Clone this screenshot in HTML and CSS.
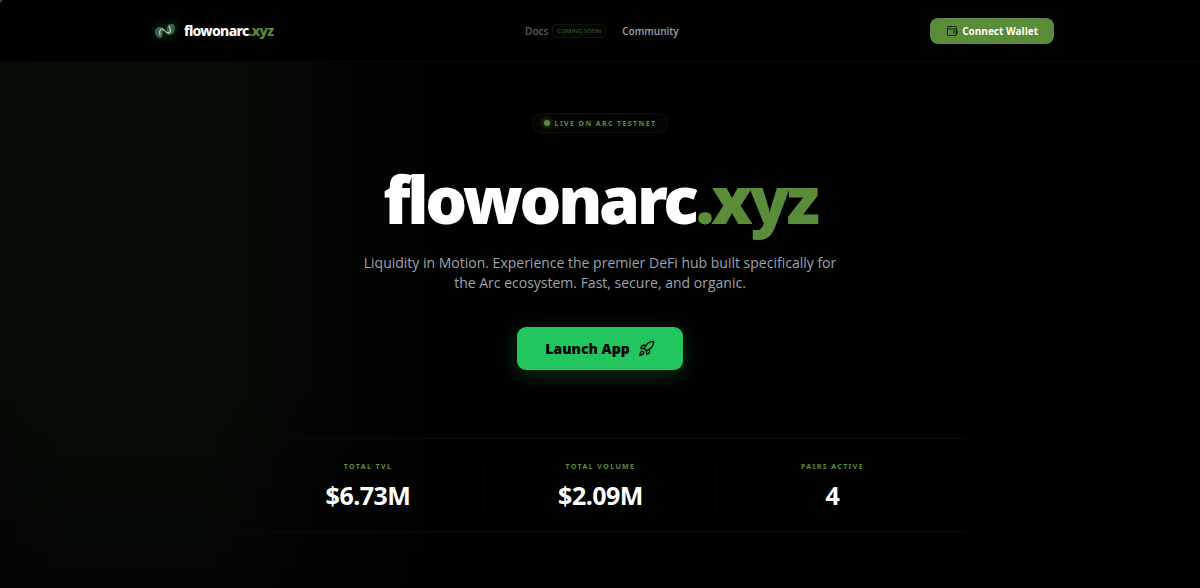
FILE: index.html
```html
<!DOCTYPE html>
<html lang="en">
<head>
  <meta charset="UTF-8">
  <meta name="viewport" content="width=device-width, initial-scale=1">
  <title>flowonarc.xyz</title>
  <link rel="stylesheet" href="styles.css">
</head>
<body>

  <header class="navbar">
    <div class="navbar-inner">
      <a class="brand" href="#">
        <svg class="brand-logo" viewBox="0 0 22 18" aria-hidden="true">
          <path d="M1 10C1 6 4 4.500 7 5C10 5.500 10 8 9 10.500L8 15.500C5 17 1 15 1 10Z" fill="#37634a"/>
          <path d="M21 6C21 11 18 13 15 13C12 13 12 9 13 6L14 3C17 1 21 1 21 6Z" fill="#37634a"/>
          <path d="M6 13C5 9 6 7 8 7C11 7 11 11 14 11C17 11 17 7 15 4" fill="none" stroke="#c3cfc6" stroke-width="1.2" stroke-linecap="round"/>
        </svg>
        <span class="brand-name">flowonarc<span class="green">.xyz</span></span>
      </a>

      <nav class="nav-links">
        <span class="nav-item disabled">Docs <span class="soon">COMING SOON</span></span>
        <a class="nav-item" href="#">Community</a>
      </nav>

      <button class="btn-wallet" type="button">
        <svg viewBox="0 0 24 24" aria-hidden="true">
          <rect x="3" y="3" width="18" height="18" rx="3"/>
          <path d="M3 8h18"/>
          <path d="M22 12h-5a2 2 0 0 0 0 4h5z"/>
        </svg>
        Connect Wallet
      </button>
    </div>
  </header>

  <main class="hero">
    <div class="badge"><span class="dot"></span>LIVE ON ARC TESTNET</div>

    <h1>flowonarc<span class="green">.xyz</span></h1>

    <p class="tagline">Liquidity in Motion. Experience the premier DeFi hub built specifically for the Arc ecosystem. Fast, secure, and organic.</p>

    <button class="btn-launch" type="button">
      Launch App
      <svg viewBox="0 0 24 24" aria-hidden="true">
        <path d="M4.5 16.5c-1.5 1.26-2 5-2 5s3.74-.5 5-2c.71-.84.7-2.13-.09-2.91a2.18 2.18 0 0 0-2.91-.09z"/>
        <path d="m12 15-3-3a22 22 0 0 1 2-3.95A12.88 12.88 0 0 1 22 2c0 2.72-.78 7.5-6 11a22.35 22.35 0 0 1-4 2z"/>
        <path d="M9 12H4s.55-3.03 2-4c1.62-1.08 5 0 5 0"/>
        <path d="M12 15v5s3.03-.55 4-2c1.08-1.62 0-5 0-5"/>
      </svg>
    </button>

    <dl class="stats">
      <div class="stat">
        <dt>TOTAL TVL</dt>
        <dd>$6.73M</dd>
      </div>
      <div class="stat">
        <dt>TOTAL VOLUME</dt>
        <dd>$2.09M</dd>
      </div>
      <div class="stat">
        <dt>PAIRS ACTIVE</dt>
        <dd>4</dd>
      </div>
    </dl>
  </main>

</body>
</html>
```

FILE: styles.css
```css
* { box-sizing: border-box; }

html { background: #3a3a3a; }

body {
  margin: 0;
  min-height: 100vh;
  border-top-left-radius: 5px;
  color: #fff;
  font-family: "Open Sans", "Noto Sans", sans-serif;
  background:
    linear-gradient(to bottom, transparent 62%, rgba(0, 0, 0, 0.5)),
    linear-gradient(to right, #060a05 0, #070c06 60px, #070c06 210px, #040603 320px, #000 450px);
}

.green { color: #5b8c3a; }

/* navbar */
.navbar {
  border-bottom: 1px solid #080a08;
  border-top-left-radius: 5px;
  background: #000;
}
.navbar-inner {
  display: flex;
  justify-content: space-between;
  align-items: center;
  max-width: 956px;
  height: 61px;
  margin: 0 auto;
  padding: 0 24px;
}
.brand {
  display: flex;
  align-items: center;
  gap: 8px;
  padding-left: 8px;
  color: #fff;
  text-decoration: none;
}
.brand-logo {
  width: 22px;
  height: 18px;
  filter: drop-shadow(0 0 6px rgba(60, 120, 60, 0.5));
}
.brand-name {
  font-family: "Noto Sans", sans-serif;
  font-size: 14px;
  font-weight: 800;
  letter-spacing: -0.05em;
}
.nav-links {
  display: flex;
  align-items: center;
  gap: 16px;
}
.nav-item {
  display: flex;
  align-items: center;
  gap: 4px;
  color: #9ca3af;
  font-size: 10px;
  font-weight: 600;
  text-decoration: none;
}
.nav-item.disabled { color: #5b6067; }
.soon {
  padding: 1px 4px;
  border: 1px solid #0c1309;
  border-radius: 3px;
  background: #040703;
  color: #35541f;
  font-size: 6px;
  line-height: 10px;
}

button {
  display: flex;
  align-items: center;
  border: 0;
  font-family: inherit;
  cursor: pointer;
}
button svg {
  fill: none;
  stroke: currentColor;
  stroke-width: 2;
  stroke-linecap: round;
  stroke-linejoin: round;
}
.btn-wallet {
  gap: 4px;
  height: 26px;
  padding: 0 16px;
  border-radius: 8px;
  background: #5b8c3a;
  color: #fff;
  font-size: 10px;
  font-weight: 700;
}
.btn-wallet svg {
  width: 12px;
  height: 12px;
  color: #10200a;
}

/* hero */
.hero {
  display: flex;
  flex-direction: column;
  align-items: center;
  padding: 51px 24px 56px;
}
.badge {
  display: flex;
  align-items: center;
  gap: 5px;
  height: 20px;
  padding: 0 11px;
  border: 1px solid #0c1408;
  border-radius: 10px;
  background: #030502;
  color: #5b8c3a;
  font-family: "Noto Sans", sans-serif;
  font-size: 7px;
  font-weight: 700;
  letter-spacing: 0.2em;
}
.dot {
  width: 6px;
  height: 6px;
  border-radius: 50%;
  background: #5b8c3a;
  box-shadow: 0 0 6px #5b8c3a;
}
h1 {
  margin: 25px 0 0;
  font-family: "Noto Sans", sans-serif;
  font-size: 66px;
  font-weight: 900;
  line-height: 80px;
  letter-spacing: -0.05em;
}
.tagline {
  max-width: 490px;
  margin: 15px 0 0;
  color: #9ca3af;
  font-size: 14px;
  font-weight: 500;
  line-height: 20px;
  text-align: center;
}
.btn-launch {
  gap: 8px;
  height: 43px;
  margin-top: 34px;
  padding: 0 28px;
  border-radius: 9px;
  background: #22c55e;
  box-shadow: 0 5px 20px rgba(34, 197, 94, 0.25);
  color: #000;
  font-family: "Noto Sans", sans-serif;
  font-size: 14px;
  font-weight: 900;
}
.btn-launch svg {
  width: 17px;
  height: 17px;
}

/* stats */
.stats {
  display: grid;
  grid-template-columns: repeat(3, 1fr);
  width: 100%;
  max-width: 732px;
  margin: 68px 0 0;
  padding: 22px 18px 20px;
  border-top: 1px solid #090c08;
  border-bottom: 1px solid #090c08;
  font-family: "Noto Sans", sans-serif;
}
.stat {
  text-align: center;
}
.stat + .stat { border-left: 1px solid #060806; }
dt {
  color: #5b8c3a;
  font-size: 7px;
  font-weight: 700;
  line-height: 12px;
  letter-spacing: 0.2em;
}
dd {
  margin: 6px 0 0;
  font-size: 25px;
  font-weight: 700;
  line-height: 32px;
  letter-spacing: -0.02em;
}
```
